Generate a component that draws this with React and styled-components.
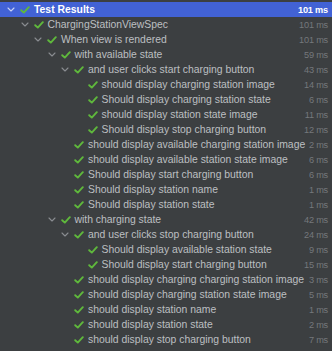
import styled, { createGlobalStyle } from 'styled-components';

const GlobalStyle = createGlobalStyle`
  html, body {
    margin: 0;
    padding: 0;
    background: #3c3f41;
  }
`;

const Panel = styled.div`
  width: 332px;
  height: 351px;
  box-sizing: border-box;
  padding-top: 2px;
  background: #3c3f41;
  font-family: "Liberation Sans", Arial, sans-serif;
  overflow: hidden;
`;

const Row = styled.div`
  display: flex;
  align-items: center;
  height: 15px;
  padding-left: ${(p) => 4 + p.$level * 13.5}px;
  padding-right: 4px;
  background: ${(p) => (p.$selected ? '#4262d5' : 'transparent')};
`;

const Slot = styled.span`
  width: 14px;
  height: 15px;
  display: flex;
  align-items: center;
  justify-content: center;
  flex: none;
`;

const Label = styled.span`
  flex: 1;
  min-width: 0;
  margin-left: 2px;
  font-size: 10.4px;
  color: ${(p) => (p.$selected ? '#ffffff' : '#bdbfc2')};
  font-weight: ${(p) => (p.$selected ? 700 : 400)};
  white-space: nowrap;
`;

const Time = styled.span`
  flex: none;
  margin-left: 4px;
  font-size: 9.2px;
  letter-spacing: -0.2px;
  color: ${(p) => (p.$selected ? '#ffffff' : '#75787c')};
  font-weight: ${(p) => (p.$selected ? 700 : 400)};
  white-space: nowrap;
`;

const Chevron = ({ selected }) => (
  <svg width="8" height="5" viewBox="0 0 8 5">
    <path d="M1 1 L4 4 L7 1" fill="none" stroke={selected ? '#c8d2f5' : '#8a8d91'} strokeWidth="1.1" strokeLinecap="round" strokeLinejoin="round" />
  </svg>
);

const Check = () => (
  <svg width="10" height="8" viewBox="0 0 10 8">
    <path d="M1.2 4.2 L3.8 6.6 L8.8 1.2" fill="none" stroke="#5fb83c" strokeWidth="1.9" strokeLinecap="round" strokeLinejoin="round" />
  </svg>
);

const rows = [
  [0, 'Test Results', '101 ms', true],
  [1, 'ChargingStationViewSpec', '101 ms', true],
  [2, 'When view is rendered', '101 ms', true],
  [3, 'with available state', '59 ms', true],
  [4, 'and user clicks start charging button', '43 ms', true],
  [5, 'should display charging station image', '14 ms'],
  [5, 'Should display charging station state', '6 ms'],
  [5, 'should display station state image', '11 ms'],
  [5, 'Should display stop charging button', '12 ms'],
  [4, 'should display available charging station image', '2 ms'],
  [4, 'should display available station state image', '6 ms'],
  [4, 'Should display start charging button', '6 ms'],
  [4, 'Should display station name', '1 ms'],
  [4, 'Should display station state', '1 ms'],
  [3, 'with charging state', '42 ms', true],
  [4, 'and user clicks stop charging button', '24 ms', true],
  [5, 'Should display available station state', '9 ms'],
  [5, 'Should display start charging button', '15 ms'],
  [4, 'should display charging charging station image', '3 ms'],
  [4, 'should display charging station state image', '5 ms'],
  [4, 'should display station name', '1 ms'],
  [4, 'should display station state', '2 ms'],
  [4, 'should display stop charging button', '7 ms'],
];

function App() {
  return (
    <>
      <GlobalStyle />
      <Panel>
        {rows.map(([level, label, time, open], i) => {
          const selected = i === 0;
          return (
            <Row key={`row-${i}`} $level={level} $selected={selected}>
              <Slot>{open && <Chevron selected={selected} />}</Slot>
              <Slot>
                <Check />
              </Slot>
              <Label $selected={selected}>{label}</Label>
              <Time $selected={selected}>{time}</Time>
            </Row>
          );
        })}
      </Panel>
    </>
  );
}

export default App;
